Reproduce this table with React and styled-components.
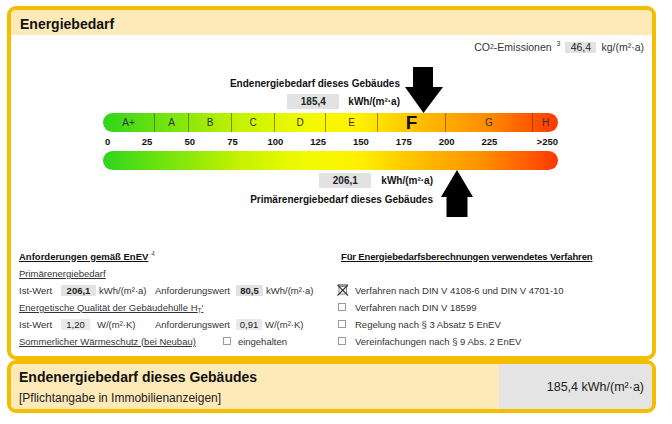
import React from "react";
import styled, { createGlobalStyle } from "styled-components";

const GlobalStyle = createGlobalStyle`
  html, body {
    margin: 0;
    padding: 0;
    background: #fff;
  }
  body {
    font-family: "Liberation Sans", Arial, sans-serif;
    color: #222;
  }
`;

const classes = [
  { label: "A+", width: 52 },
  { label: "A", width: 34 },
  { label: "B", width: 43 },
  { label: "C", width: 43 },
  { label: "D", width: 51 },
  { label: "E", width: 52 },
  { label: "F", width: 68, active: true },
  { label: "G", width: 87 },
  { label: "H", width: 25 },
];

const ticks = [25, 50, 75, 100, 125, 150, 175, 200, 225];

const methods = [
  { text: "Verfahren nach DIN V 4108-6 und DIN V 4701-10", checked: true },
  { text: "Verfahren nach DIN V 18599" },
  { text: "Regelung nach § 3 Absatz 5 EnEV" },
  { text: "Vereinfachungen nach § 9 Abs. 2 EnEV" },
];

function DownArrow() {
  return (
    <svg width="38" height="46" viewBox="0 0 38 46">
      <polygon
        points="8,0 28,0 28,20 38,20 18.5,46 0,20 8,20"
        fill="#000"
      />
    </svg>
  );
}

function UpArrow() {
  return (
    <svg width="32" height="47" viewBox="0 0 32 47">
      <polygon
        points="16,0 32,27 26.5,27 26.5,47 5.5,47 5.5,27 0,27"
        fill="#000"
      />
    </svg>
  );
}

function CrossedBox() {
  return (
    <svg width="12" height="12" viewBox="0 0 12 12">
      <rect x="2" y="2.5" width="7.5" height="7.5" fill="none" stroke="#888" strokeWidth="1" />
      <line x1="0.5" y1="1" x2="11" y2="11.5" stroke="#333" strokeWidth="1.1" />
      <line x1="11" y1="1" x2="0.5" y2="11.5" stroke="#333" strokeWidth="1.1" />
      <line x1="1" y1="1" x2="10.5" y2="1" stroke="#333" strokeWidth="1" />
    </svg>
  );
}

export default function App() {
  return (
    <>
      <GlobalStyle />
      <Page>
        <Panel>
          <PanelHeader>Energiebedarf</PanelHeader>
          <EmissionRow>
            CO<sub>2</sub>-Emissionen <Sup>3</Sup>
            <ValueBox $width={31}>46,4</ValueBox>
            <EmissionUnit>kg/(m²·a)</EmissionUnit>
          </EmissionRow>

          <Scale>
            <MarkerRow $align="flex-end" style={{ paddingRight: 115 }}>
              <MarkerLabel $bottom={4} $gap={5}>
                <MarkerTitle>Endenergiebedarf dieses Gebäudes</MarkerTitle>
                <MarkerValue $top={4}>
                  <ValueBox $width={52} $height={15} $bold>
                    185,4
                  </ValueBox>
                  <MarkerUnit $gap={9}>kWh/(m²·a)</MarkerUnit>
                </MarkerValue>
              </MarkerLabel>
              <DownArrow />
            </MarkerRow>

            <Bar>
              {classes.map((c, i) => (
                <Segment
                  key={c.label}
                  $width={c.width}
                  $last={i === classes.length - 1}
                  $active={c.active}
                >
                  {c.label}
                </Segment>
              ))}
            </Bar>

            <Numbers>
              <Tick $width={22.6} $align="left">
                0
              </Tick>
              {ticks.map((t) => (
                <Tick key={t} $width={42.8}>
                  {t}
                </Tick>
              ))}
              <Tick $align="right" $grow>
                &gt;250
              </Tick>
            </Numbers>

            <Bar />

            <MarkerRow $align="flex-start" style={{ paddingRight: 85 }}>
              <MarkerLabel $top={3} $gap={8}>
                <MarkerValue>
                  <ValueBox $width={52} $height={15} $bold>
                    206,1
                  </ValueBox>
                  <MarkerUnit $gap={10}>kWh/(m²·a)</MarkerUnit>
                </MarkerValue>
                <MarkerTitle $top={5}>Primärenergiebedarf dieses Gebäudes</MarkerTitle>
              </MarkerLabel>
              <UpArrow />
            </MarkerRow>
          </Scale>

          <Details>
            <Column>
              <Line>
                <Heading>Anforderungen gemäß EnEV</Heading>
                <Note>4</Note>
              </Line>
              <Line>
                <Underlined>Primärenergiebedarf</Underlined>
              </Line>
              <Line>
                <FieldLabel>Ist-Wert</FieldLabel>
                <FieldValue>
                  <ValueBox $width={35} $height={11} $bold>
                    206,1
                  </ValueBox>
                  <Unit $gap={3}>kWh/(m²·a)</Unit>
                </FieldValue>
                <RequirementLabel>Anforderungswert</RequirementLabel>
                <ValueBox $width={27} $height={11} $bold>
                  80,5
                </ValueBox>
                <Unit $gap={3}>kWh/(m²·a)</Unit>
              </Line>
              <Line>
                <Underlined>
                  Energetische Qualität der Gebäudehülle H<Low>T</Low>'
                </Underlined>
              </Line>
              <Line>
                <FieldLabel>Ist-Wert</FieldLabel>
                <FieldValue>
                  <ValueBox $width={29} $height={11} $light>
                    1,20
                  </ValueBox>
                  <Unit $gap={7}>W/(m²·K)</Unit>
                </FieldValue>
                <RequirementLabel>Anforderungswert</RequirementLabel>
                <ValueBox $width={26} $height={11} $light>
                  0,91
                </ValueBox>
                <Unit $gap={3}>W/(m²·K)</Unit>
              </Line>
              <Line>
                <Underlined>Sommerlicher Wärmeschutz (bei Neubau)</Underlined>
                <Box $left={27} />
                <Unit $gap={7}>eingehalten</Unit>
              </Line>
            </Column>

            <Column>
              <Line>
                <Heading $indent={4} $tight>
                  Für Energiebedarfsberechnungen verwendetes Verfahren
                </Heading>
              </Line>
              <Line />
              {methods.map((m) => (
                <Line key={m.text}>
                  <CheckSlot>{m.checked ? <CrossedBox /> : <Box />}</CheckSlot>
                  <span>{m.text}</span>
                </Line>
              ))}
            </Column>
          </Details>
        </Panel>

        <Summary>
          <SummaryText>
            <SummaryTitle>Endenergiebedarf dieses Gebäudes</SummaryTitle>
            <SummaryNote>[Pflichtangabe in Immobilienanzeigen]</SummaryNote>
          </SummaryText>
          <SummaryValue>185,4 kWh/(m²·a)</SummaryValue>
        </Summary>
      </Page>
    </>
  );
}

const Page = styled.div`
  width: 649px;
  padding: 6px 0 0 7px;
`;

const Panel = styled.section`
  border: 4px solid #f3bd00;
  border-radius: 9px;
  overflow: hidden;
  background: #fff;
  padding-bottom: 6.5px;
`;

const PanelHeader = styled.h2`
  margin: 0;
  height: 25px;
  box-sizing: border-box;
  padding: 3px 0 0 9px;
  line-height: 22px;
  font-size: 14px;
  font-weight: bold;
  color: #111;
  background: #feeab9;
`;

const EmissionRow = styled.div`
  display: flex;
  justify-content: flex-end;
  align-items: center;
  margin-top: 5px;
  height: 14px;
  padding-right: 8px;
  font-size: 10.5px;
  color: #333;
  white-space: pre;

  sub {
    font-size: 7px;
    vertical-align: -2px;
    line-height: 0;
  }
`;

const EmissionUnit = styled.span`
  margin-left: 5px;
`;

const Sup = styled.span`
  font-size: 7px;
  position: relative;
  top: -4px;
  margin: 0 5px 0 2px;
`;

const ValueBox = styled.span`
  display: inline-flex;
  align-items: center;
  justify-content: center;
  width: ${(p) => p.$width}px;
  height: ${(p) => p.$height || 11}px;
  background: ${(p) => (p.$light ? "#e9e9e9" : "#e2e2e2")};
  font-weight: ${(p) => (p.$bold ? "bold" : "normal")};
  color: #222;
  flex-shrink: 0;
`;

const Scale = styled.div`
  width: 455px;
  margin-left: 92px;
`;

const MarkerRow = styled.div`
  display: flex;
  justify-content: flex-end;
  align-items: ${(p) => p.$align};
  margin-top: ${(p) => (p.$align === "flex-end" ? 13 : 0)}px;
`;

const MarkerLabel = styled.div`
  display: flex;
  flex-direction: column;
  align-items: flex-end;
  margin-top: ${(p) => p.$top || 0}px;
  margin-bottom: ${(p) => p.$bottom || 0}px;
  margin-right: ${(p) => p.$gap}px;
  font-size: 10px;
  font-weight: bold;
  color: #111;
`;

const MarkerTitle = styled.div`
  line-height: 13px;
  margin-top: ${(p) => p.$top || 0}px;
  white-space: nowrap;
`;

const MarkerValue = styled.div`
  display: flex;
  align-items: center;
  margin-top: ${(p) => p.$top || 0}px;
`;

const MarkerUnit = styled.span`
  margin-left: ${(p) => p.$gap}px;
`;

const Bar = styled.div`
  display: flex;
  height: 19px;
  border-radius: 10px;
  background: linear-gradient(
    90deg,
    #2fd51c 0%,
    #74e40e 14%,
    #c4f200 30%,
    #f2fa00 44%,
    #fff200 56%,
    #ffc400 68%,
    #ff8d00 84%,
    #ff3800 100%
  );
`;

const Segment = styled.div`
  display: flex;
  align-items: center;
  justify-content: center;
  width: ${(p) => p.$width}px;
  height: 19px;
  box-sizing: border-box;
  flex-shrink: 0;
  border-right: ${(p) => (p.$last ? "none" : "1px solid rgba(70, 60, 0, 0.55)")};
  line-height: 1;
  font-size: ${(p) => (p.$active ? "19px" : "10px")};
  font-weight: ${(p) => (p.$active ? "bold" : "normal")};
  color: ${(p) => (p.$active ? "#111" : "#333")};
`;

const Numbers = styled.div`
  display: flex;
  height: 19px;
  align-items: center;
  font-size: 9.5px;
  font-weight: bold;
  color: #111;
`;

const Tick = styled.span`
  width: ${(p) => (p.$width ? `${p.$width}px` : "auto")};
  flex: ${(p) => (p.$grow ? 1 : "none")};
  text-align: ${(p) => p.$align || "center"};
  padding-left: ${(p) => (p.$align === "left" ? 2 : 0)}px;
  box-sizing: border-box;
`;

const Details = styled.div`
  display: grid;
  grid-template-columns: 318px 1fr;
  margin-top: 30.5px;
  padding-left: 8px;
  font-size: 9.5px;
  color: #333;
`;

const Column = styled.div`
  display: flex;
  flex-direction: column;
`;

const Line = styled.div`
  display: flex;
  align-items: center;
  height: 17px;
  white-space: nowrap;
`;

const Heading = styled.span`
  font-weight: bold;
  color: #111;
  text-decoration: underline;
  margin-left: ${(p) => p.$indent || 0}px;
  letter-spacing: ${(p) => (p.$tight ? "-0.15px" : "0")};
`;

const Note = styled.span`
  font-size: 6.5px;
  color: #555;
  margin-left: 3px;
  position: relative;
  top: -3px;
`;

const Underlined = styled.span`
  text-decoration: underline;
`;

const Low = styled.span`
  font-size: 6.5px;
  position: relative;
  top: 2px;
`;

const FieldLabel = styled.span`
  width: 42px;
`;

const FieldValue = styled.span`
  display: flex;
  align-items: center;
  width: 94px;
`;

const RequirementLabel = styled.span`
  width: 81px;
`;

const Unit = styled.span`
  margin-left: ${(p) => p.$gap}px;
`;

const Box = styled.span`
  display: inline-block;
  width: 6px;
  height: 6px;
  border: 1px solid #9a9a9a;
  margin-left: ${(p) => p.$left || 0}px;
  flex-shrink: 0;
`;

const CheckSlot = styled.span`
  display: flex;
  align-items: center;
  justify-content: flex-start;
  width: 18px;
  padding-left: 1px;
  box-sizing: border-box;

  svg {
    margin-left: -1px;
  }
`;

const Summary = styled.section`
  display: flex;
  height: 45px;
  border: 4px solid #f3bd00;
  border-radius: 9px;
  overflow: hidden;
`;

const SummaryText = styled.div`
  flex: 1;
  background: #feeab9;
  padding: 4.5px 0 0 8px;
`;

const SummaryTitle = styled.div`
  font-size: 14px;
  line-height: 17px;
  font-weight: bold;
  color: #111;
`;

const SummaryNote = styled.div`
  margin-top: 5px;
  font-size: 12px;
  line-height: 15px;
  color: #222;
`;

const SummaryValue = styled.div`
  width: 153px;
  box-sizing: border-box;
  display: flex;
  align-items: center;
  justify-content: flex-end;
  padding-right: 8px;
  background: #e4e4e4;
  font-size: 12.5px;
  color: #222;
`;
